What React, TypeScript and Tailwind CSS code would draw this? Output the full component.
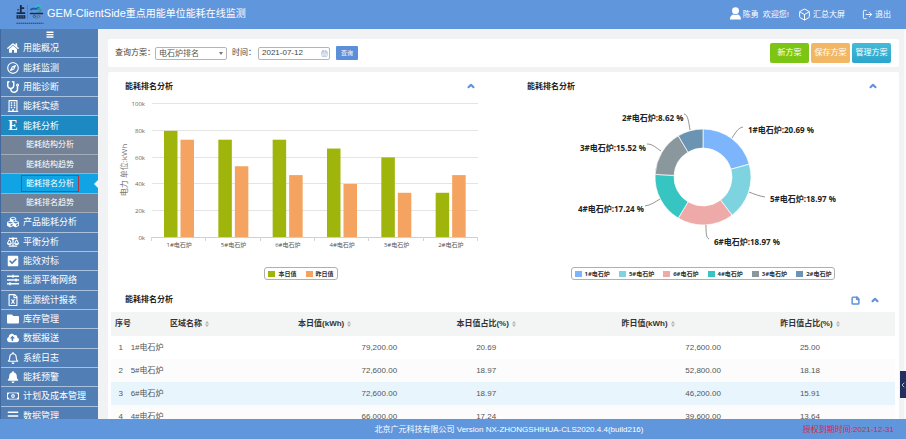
import React from "react";
import type { IconType } from "react-icons";
import {
  FaBalanceScale,
  FaBars,
  FaBell,
  FaCheckSquare,
  FaCloudUploadAlt,
  FaCubes,
  FaFolder,
  FaHome,
  FaRegBell,
  FaRegBuilding,
  FaRegCompass,
  FaRegFileExcel,
  FaRegMoneyBillAlt,
  FaSlidersH,
  FaStethoscope,
} from "react-icons/fa";
import { Box, CalendarDays, ChevronLeft, ChevronUp, LogOut, StickyNote } from "lucide-react";

interface MenuItem {
  label: string;
  icon?: IconType;
  children?: string[];
}

const menu: MenuItem[] = [
  { label: "用能概况", icon: FaHome },
  { label: "能耗监测", icon: FaRegCompass },
  { label: "用能诊断", icon: FaStethoscope },
  { label: "能耗实绩", icon: FaRegBuilding },
  { label: "能耗分析", children: ["能耗结构分析", "能耗结构趋势", "能耗排名分析", "能耗排名趋势"] },
  { label: "产品能耗分析", icon: FaCubes },
  { label: "平衡分析", icon: FaBalanceScale },
  { label: "能效对标", icon: FaCheckSquare },
  { label: "能源平衡网络", icon: FaSlidersH },
  { label: "能源统计报表", icon: FaRegFileExcel },
  { label: "库存管理", icon: FaFolder },
  { label: "数据报送", icon: FaCloudUploadAlt },
  { label: "系统日志", icon: FaRegBell },
  { label: "能耗预警", icon: FaBell },
  { label: "计划及成本管理", icon: FaRegMoneyBillAlt },
  { label: "数据管理", icon: FaBars },
];

const activeSub = "能耗排名分析";

const furnaces = [
  { name: "1#电石炉", today: 79.2, yesterday: 72.6 },
  { name: "5#电石炉", today: 72.6, yesterday: 52.8 },
  { name: "6#电石炉", today: 72.6, yesterday: 46.2 },
  { name: "4#电石炉", today: 66, yesterday: 39.6 },
  { name: "3#电石炉", today: 59.4, yesterday: 33 },
  { name: "2#电石炉", today: 33, yesterday: 46.2 },
];

const slices = [
  { name: "1#电石炉", value: 20.69, color: "#7cb5fb", x: 225, y: 37, line: "M209 42 C213 36 215 32 220 31" },
  { name: "5#电石炉", value: 18.97, color: "#7ed3e0", x: 247, y: 106, line: "M226 96 C231 98 236 100 242 101" },
  { name: "6#电石炉", value: 18.97, color: "#eeaaa8", x: 191, y: 149, line: "M183 129 C183 136 183 142 186 143" },
  { name: "4#电石炉", value: 17.24, color: "#36c5c0", x: 55, y: 116, line: "M137 103 C132 106 128 109 122 110" },
  { name: "3#电石炉", value: 15.52, color: "#8a989e", x: 57, y: 55, line: "M138 55 C133 52 130 48 124 48" },
  { name: "2#电石炉", value: 8.62, color: "#6b94b3", x: 99, y: 25, line: "M167 34 C166 28 165 18 161 18" },
];

const rows = [
  ["1#电石炉", "79,200.00", "20.69", "72,600.00", "25.00"],
  ["5#电石炉", "72,600.00", "18.97", "52,800.00", "18.18"],
  ["6#电石炉", "72,600.00", "18.97", "46,200.00", "15.91"],
  ["4#电石炉", "66,000.00", "17.24", "39,600.00", "13.64"],
];

const columns = [
  { label: "区域名称", width: "w-[15%]" },
  { label: "本日值(kWh)", width: "w-[19.5%]" },
  { label: "本日值占比(%)", width: "w-[21.7%]" },
  { label: "昨日值(kWh)", width: "w-[19.6%]" },
  { label: "昨日值占比(%)", width: "w-[21.7%]" },
];

function Logo() {
  return (
    <svg viewBox="0 0 28 22" className="h-[22px] w-7" aria-hidden="true">
      <g fill="none" stroke="#1c2b48" strokeWidth="1.8">
        <path d="M4.8 1v8M4.8 4.2h3.4M0.6 9.2h8.6" />
        <path d="M1.2 5.8h2" strokeWidth="1" />
      </g>
      <path d="M0.5 11.2h8.8v3.4H0.5z" fill="#1c2b48" />
      <path d="M2.5 11.5v2.4M4.9 11.5v2.4M7.2 11.5v2.4" stroke="#6f97cf" strokeWidth="0.5" />
      <path d="M11.5 1v14" stroke="#4f78b4" strokeWidth="0.7" />
      <g fill="none" strokeLinecap="round">
        <path d="M19 3 C20.5 1.2 23 0.6 24.5 1.6" stroke="#38b4e0" strokeWidth="2" />
        <path d="M15 5.5 C18 3.2 20 6.2 22.5 4" stroke="#2757a5" strokeWidth="1.9" />
        <path d="M22 4.8 C25 4.8 26 7 23 7.8" stroke="#2fa37e" strokeWidth="1.7" />
        <path d="M14.5 9.5h12" stroke="#1c2b48" strokeWidth="1.5" />
        <path d="M20.5 7 L18.5 8.2" stroke="#3fa9d8" strokeWidth="1.2" />
        <circle cx="18.4" cy="12.4" r="1.2" stroke="#274d86" strokeWidth="0.8" />
        <circle cx="20.5" cy="13.6" r="1.2" stroke="#3e8f6b" strokeWidth="0.8" />
        <circle cx="22.6" cy="12.4" r="1.2" stroke="#b34c55" strokeWidth="0.8" />
      </g>
      <path d="M0.5 19.2h27" stroke="#24406e" strokeWidth="1.1" strokeDasharray="1.5 0.5" />
    </svg>
  );
}

function Header() {
  return (
    <header className="flex h-[29px] shrink-0 items-center bg-[#6096dc] pr-[15px] pl-4 text-white">
      <Logo />
      <h1 className="ml-[3px] pb-[3px] text-[10px] leading-4 whitespace-nowrap">
        <span className="text-[11px]">GEM-ClientSide</span>重点用能单位能耗在线监测
      </h1>
      <div className="ml-auto flex items-center whitespace-nowrap">
        <svg viewBox="0 0 12 14" className="mr-[2px] mb-[2px] h-[13px] w-[11px]" fill="currentColor" aria-hidden="true">
          <circle cx="6" cy="4" r="3.8" />
          <path d="M0 13.5 C0 9.6 2.4 8.3 4 8.1 Q6 9.2 8 8.1 C9.6 8.3 12 9.6 12 13.5 Z" />
        </svg>
        <span>陈勇</span>
        <span className="ml-1">欢迎您!</span>
        <a href="#screen" className="ml-[9px] flex items-center gap-[2px]">
          <Box className="size-[13px]" strokeWidth={1.8} />
          汇总大屏
        </a>
        <a href="#logout" className="ml-[17px] flex items-center gap-[2px]">
          <LogOut className="size-[11px]" strokeWidth={2} />
          退出
        </a>
      </div>
    </header>
  );
}

function Sidebar() {
  return (
    <nav className="w-[98px] shrink-0 overflow-hidden border-l border-[#41689f] bg-[#507eb5] text-white">
      <button type="button" aria-label="收起菜单" className="flex h-[10px] w-full items-center justify-center">
        <svg viewBox="0 0 8 7" className="h-[7px] w-2" fill="currentColor" aria-hidden="true">
          <path d="M0.5 0.5h7v1.4h-7zM0.5 2.9h7v1.4h-7zM0.5 5.3h7v1.4h-7z" />
        </svg>
      </button>
      <ul className="grid h-[387px] auto-rows-fr">
        {menu.map(({ label, icon: Icon, children }) => (
          <React.Fragment key={label}>
            <li className={`border-b border-[#a9c1de] ${children ? "bg-[#1c89c3]" : ""}`}>
              <a href="#menu" className="flex h-full items-center gap-1 pl-[6px] text-[9px] whitespace-nowrap">
                {Icon ? (
                  <Icon className="size-3 shrink-0" />
                ) : (
                  <span className="w-3 text-center font-['Liberation_Serif',serif] text-[14px] leading-none font-bold">
                    E
                  </span>
                )}
                {label}
              </a>
            </li>
            {children?.map((sub) => (
              <li
                key={sub}
                className={`relative border-b border-[#a3adba] ${sub === activeSub ? "bg-[#11a4e4]" : "bg-[#738296]"}`}
              >
                <a href="#submenu" className="flex h-full items-center pl-5 whitespace-nowrap">
                  <span className={`border px-1 leading-[15px] ${sub === activeSub ? "border-[#b8323e]" : "border-transparent"}`}>
                    {sub}
                  </span>
                </a>
                {sub === activeSub && (
                  <span className="absolute top-1/2 right-0 -translate-y-1/2 border-y-4 border-r-4 border-y-transparent border-r-[#f1f2f3]" />
                )}
              </li>
            ))}
          </React.Fragment>
        ))}
      </ul>
    </nav>
  );
}

function QueryBar() {
  return (
    <form className="flex h-7 shrink-0 items-center rounded-[2px] bg-white pr-2 pl-[7px] whitespace-nowrap">
      <label htmlFor="plan">查询方案：</label>
      <div className="relative">
        <select
          id="plan"
          className="h-[13px] w-[72px] appearance-none rounded-[2px] border border-[#b5b5b5] bg-white pl-[3px] leading-[11px] text-[#555]"
        >
          <option>电石炉排名</option>
        </select>
        <span className="pointer-events-none absolute top-[5px] right-[4px] border-x-2 border-t-[3px] border-x-transparent border-t-[#777]" />
      </div>
      <label htmlFor="date" className="ml-[5px]">
        时间：
      </label>
      <div className="ml-[2px] flex h-[13px] w-[72px] items-center rounded-[2px] border border-[#b5b5b5] pr-px pl-[3px]">
        <input id="date" type="text" defaultValue="2021-07-12" className="w-0 min-w-0 flex-1 outline-none" />
        <CalendarDays className="size-[7px] text-[#8fa5cc]" />
      </div>
      <button type="button" className="ml-[6px] h-[14px] w-[22px] rounded-[1px] bg-[#5b8fd9] text-[6px] text-white">
        查询
      </button>
      <div className="ml-auto flex gap-[2px] text-white">
        <button type="button" className="h-5 w-[39px] rounded-[2px] bg-[#7cc514]">
          新方案
        </button>
        <button type="button" className="h-5 w-[39px] rounded-[2px] bg-[#f1b765]">
          保存方案
        </button>
        <button type="button" className="h-5 w-[39px] rounded-[2px] bg-linear-to-b from-[#45bad8] to-[#2ba5cb]">
          管理方案
        </button>
      </div>
    </form>
  );
}

function SectionTitle({ children }: { children?: React.ReactNode }) {
  return (
    <div className="flex h-5 items-center pr-[5px] pl-1">
      <h2 className="font-bold text-[#222]">能耗排名分析</h2>
      <div className="ml-auto flex items-center gap-[10px] text-[#5f92db]">
        {children}
        <button type="button" aria-label="收起">
          <ChevronUp className="size-[10px]" strokeWidth={5} />
        </button>
      </div>
    </div>
  );
}

function Legend({ items }: { items: { name: string; color: string }[] }) {
  return (
    <ul className="mx-auto mt-[7px] flex h-[13px] w-fit items-center gap-[9px] rounded-[3px] border border-[#b0b0b0] px-[3px] text-[6px] font-bold text-[#333]">
      {items.map(({ name, color }) => (
        <li key={name} className="flex items-center gap-[3px] whitespace-nowrap">
          <span className="h-[6px] w-[7px]" style={{ backgroundColor: color }} />
          {name}
        </li>
      ))}
    </ul>
  );
}

function BarChart() {
  const left = 31;
  const right = 357;
  const base = 141;
  const unit = 1.34;
  const step = (right - left) / furnaces.length;

  return (
    <svg viewBox="0 0 360 164" className="w-full overflow-visible" role="img" aria-label="电力柱状图">
      {[0, 20, 40, 60, 80, 100].map((tick) => {
        const y = Math.round(base - tick * unit) + 0.5;
        return (
          <g key={tick}>
            <line x1={left} x2={right} y1={y} y2={y} stroke={tick === 0 ? "#cfcfcf" : "#e4e4e4"} />
            <text x={24} y={y + 2} textAnchor="end" fontSize="6" fill="#666">
              {tick}k
            </text>
          </g>
        );
      })}
      {[0, 1, 2, 3, 4, 5, 6].map((i) => {
        const x = Math.round(left + step * i) - 0.5;
        return <line key={i} x1={x} x2={x} y1={base} y2={base + 4} stroke="#d5d5d5" />;
      })}
      <text transform="translate(6 74) rotate(-90)" textAnchor="middle" fontSize="8" fill="#777">
        电力 单位:kWh
      </text>
      {furnaces.map(({ name, today, yesterday }, i) => {
        const x = left + step * i;
        return (
          <g key={name}>
            <rect x={x + 12} y={base - today * unit} width={13.5} height={today * unit} fill="#9fb50b" />
            <rect x={x + 28.5} y={base - yesterday * unit} width={13.5} height={yesterday * unit} fill="#f4a460" />
            <text x={x + step / 2} y={base + 10} textAnchor="middle" fontSize="6" fill="#555">
              {name}
            </text>
          </g>
        );
      })}
    </svg>
  );
}

function DonutChart() {
  const cx = 180;
  const cy = 81;
  const outer = 48;
  const inner = 29;

  const point = (r: number, share: number) => {
    const angle = (share / 100) * 2 * Math.PI;
    return `${cx + r * Math.sin(angle)} ${cy - r * Math.cos(angle)}`;
  };

  let start = 0;
  const arcs = slices.map((slice) => {
    const from = start;
    const to = start + slice.value;
    start = to;
    return {
      ...slice,
      d: `M${point(outer, from)} A${outer} ${outer} 0 0 1 ${point(outer, to)} L${point(inner, to)} A${inner} ${inner} 0 0 0 ${point(inner, from)} Z`,
    };
  });

  return (
    <svg viewBox="0 0 360 164" className="w-full overflow-visible" role="img" aria-label="占比环形图">
      {arcs.map(({ name, value, color, x, y, line, d }) => (
        <g key={name}>
          <path d={d} fill={color} stroke="#fff" strokeWidth="0.7" />
          <path d={line} fill="none" stroke="#666" strokeWidth="0.7" />
          <text x={x} y={y} fontSize="8" fontWeight="bold" fill="#222">
            {name}:{value} %
          </text>
        </g>
      ))}
    </svg>
  );
}

function SortIcon() {
  return (
    <svg viewBox="0 0 4 6" className="ml-[3px] inline-block h-[6px] w-1 align-middle" fill="#b5b5b5" aria-hidden="true">
      <path d="M2 0 L4 2.5 H0Z M2 6 L4 3.5 H0Z" />
    </svg>
  );
}

function RankTable() {
  return (
    <table className="w-full table-fixed whitespace-nowrap text-[#555]">
      <thead>
        <tr className="h-6 bg-[#f3f4f4] text-[#333]">
          <th className="w-[19px] pl-1 text-left">序号</th>
          {columns.map(({ label, width }) => (
            <th key={label} className={`${width} text-center`}>
              {label}
              <SortIcon />
            </th>
          ))}
        </tr>
      </thead>
      <tbody>
        {rows.map(([name, today, todayShare, yesterday, yesterdayShare], i) => (
          <tr key={name} className={`h-[23px] ${i === 2 ? "bg-[#e8f5fd]" : i % 2 ? "bg-[#fcfcfc]" : "bg-white"}`}>
            <td className="text-center">{i + 1}</td>
            <td>{name}</td>
            <td className="pr-1 text-right">{today}</td>
            <td className="text-center">{todayShare}</td>
            <td className="pr-1 text-right">{yesterday}</td>
            <td className="text-center">{yesterdayShare}</td>
          </tr>
        ))}
      </tbody>
    </table>
  );
}

export default function App() {
  return (
    <div
      lang="zh-CN"
      className="relative flex h-screen flex-col overflow-hidden font-['Liberation_Sans','Noto_Sans_CJK_SC',sans-serif] text-[8px] leading-3 text-[#444]"
    >
      <Header />
      <div className="flex min-h-0 flex-1">
        <Sidebar />
        <main className="flex min-w-0 flex-1 flex-col gap-[5px] overflow-hidden border-r-2 border-[#fafafa] bg-[#f1f2f3] pt-[10px] pr-[5px] pl-[10px]">
          <QueryBar />
          <section className="flex-1 rounded-t-[2px] bg-white pt-1">
            <div className="grid grid-cols-2 gap-[42px] pr-4 pl-[13px] font-['Open_Sans','Noto_Sans_CJK_SC',sans-serif]">
              <div>
                <SectionTitle />
                <BarChart />
                <Legend
                  items={[
                    { name: "本日值", color: "#9fb50b" },
                    { name: "昨日值", color: "#f4a460" },
                  ]}
                />
              </div>
              <div>
                <SectionTitle />
                <DonutChart />
                <Legend items={slices} />
              </div>
            </div>
            <div className="mt-[10px] pr-[14px] pb-[2px] pl-[13px]">
              <SectionTitle>
                <button type="button" aria-label="导出">
                  <StickyNote className="size-[9px]" strokeWidth={4} />
                </button>
              </SectionTitle>
            </div>
            <div className="pr-1 pl-[3px]">
              <RankTable />
            </div>
          </section>
        </main>
      </div>
      <footer className="relative flex h-5 shrink-0 items-center justify-center bg-[#6096dc] pt-[2px] text-white">
        <span className="pl-28">北京广元科技有限公司 Version NX-ZHONGSHIHUA-CLS2020.4.4(build216)</span>
        <span className="absolute right-3 text-[#d8283c]">授权到期时间:2021-12-31</span>
      </footer>
      <button
        type="button"
        aria-label="展开侧栏"
        className="absolute right-0 bottom-[41px] flex h-[27px] w-[6px] items-center justify-center bg-[#22305f] text-white"
      >
        <ChevronLeft className="size-2 shrink-0" />
      </button>
    </div>
  );
}
